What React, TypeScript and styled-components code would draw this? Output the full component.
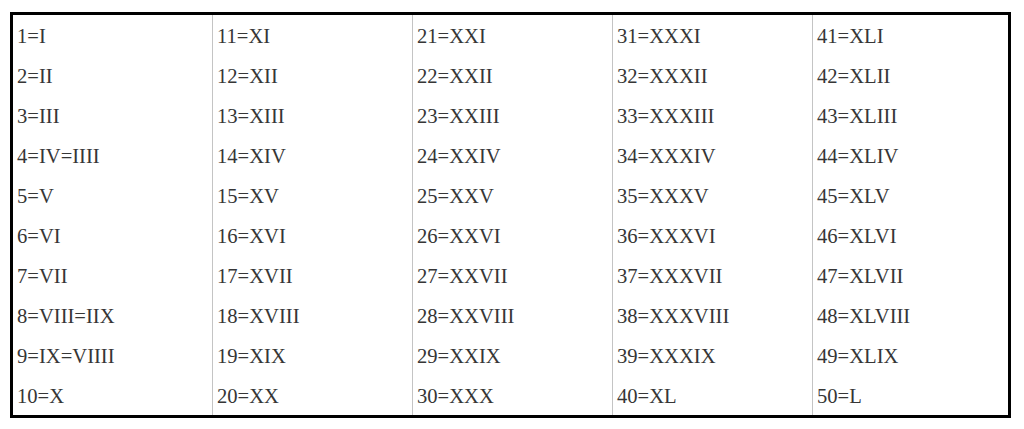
import React from "react";
import styled, { createGlobalStyle } from "styled-components";

const GlobalStyle = createGlobalStyle`
  html, body { margin: 0; padding: 0; background: #ffffff; }
  body { font-family: "Liberation Serif", "Times New Roman", serif; }
`;

const Page = styled.div`
  padding: 12px 0 0 10px;
`;

const Table = styled.div`
  box-sizing: border-box;
  width: 1001px;
  border: 3px solid #000;
  display: grid;
  grid-template-columns: 199px 200px 200px 200px 1fr;
`;

const Column = styled.div<{ $first?: boolean }>`
  display: flex;
  flex-direction: column;
  border-left: ${(p) => (p.$first ? "none" : "1px solid #c4c4c4")};
`;

const Cell = styled.div`
  box-sizing: border-box;
  height: 40px;
  padding: 2px 0 0 4px;
  line-height: 38px;
  font-size: 20.6px;
  color: #363636;
  white-space: nowrap;
`;

const columns: string[][] = [
  ["1=I", "2=II", "3=III", "4=IV=IIII", "5=V", "6=VI", "7=VII", "8=VIII=IIX", "9=IX=VIIII", "10=X"],
  ["11=XI", "12=XII", "13=XIII", "14=XIV", "15=XV", "16=XVI", "17=XVII", "18=XVIII", "19=XIX", "20=XX"],
  ["21=XXI", "22=XXII", "23=XXIII", "24=XXIV", "25=XXV", "26=XXVI", "27=XXVII", "28=XXVIII", "29=XXIX", "30=XXX"],
  ["31=XXXI", "32=XXXII", "33=XXXIII", "34=XXXIV", "35=XXXV", "36=XXXVI", "37=XXXVII", "38=XXXVIII", "39=XXXIX", "40=XL"],
  ["41=XLI", "42=XLII", "43=XLIII", "44=XLIV", "45=XLV", "46=XLVI", "47=XLVII", "48=XLVIII", "49=XLIX", "50=L"],
];

export default function App() {
  return (
    <>
      <GlobalStyle />
      <Page>
        <Table>
          {columns.map((col, i) => (
            <Column key={i} $first={i === 0}>
              {col.map((t) => (
                <Cell key={t}>{t}</Cell>
              ))}
            </Column>
          ))}
        </Table>
      </Page>
    </>
  );
}
